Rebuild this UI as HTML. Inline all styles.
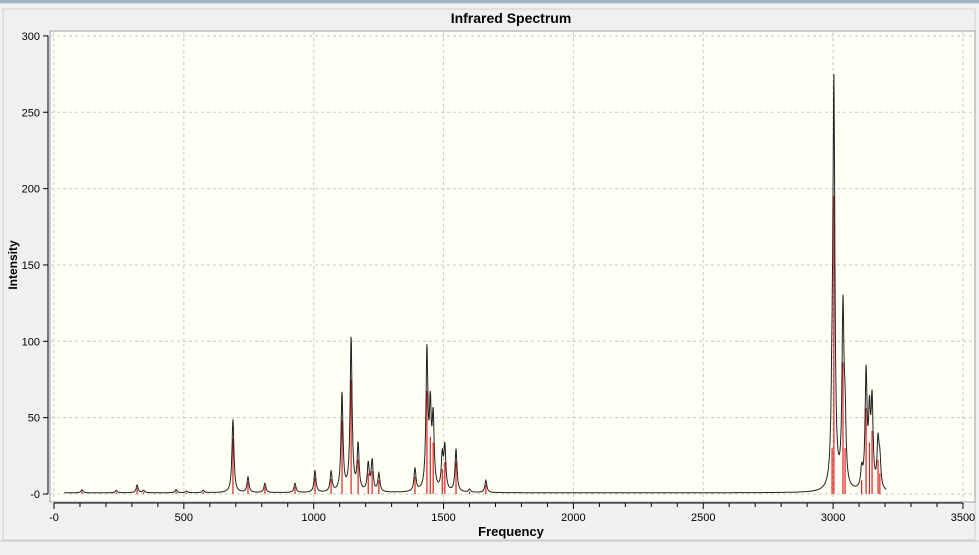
<!DOCTYPE html>
<html><head><meta charset="utf-8"><style>
html,body{margin:0;padding:0;width:979px;height:555px;overflow:hidden;background:#f0f0f0;font-family:"Liberation Sans",sans-serif}
</style></head><body>
<svg id="s" width="979" height="555" xmlns="http://www.w3.org/2000/svg" font-family="Liberation Sans, sans-serif">
<rect x="0" y="0" width="979" height="555" fill="#f0f0f0"/>
<rect x="0" y="0" width="979" height="3" fill="#9fb3c8"/>
<rect x="0" y="3" width="979" height="1" fill="#d8e0e8"/>
<rect x="3" y="9" width="972" height="531" fill="#f0f0f0" stroke="#d0d0d0"/>
<line x1="0" y1="541" x2="979" y2="541" stroke="#c8c8c8"/>
<text x="511" y="23" font-size="14" font-weight="bold" text-anchor="middle" fill="#000">Infrared Spectrum</text>
<rect x="50" y="31" width="925" height="471" fill="#fffff6" stroke="#a0a0a0"/>
<g id="grid" stroke="#c8c8c8" stroke-dasharray="3,3" fill="none"></g>
<g id="ax" stroke="#000" fill="none"></g>
<g id="lab" font-size="11" fill="#000"></g>
<g id="sticks" stroke="#e02020" stroke-width="1.2"></g>
<path id="sp" fill="none" stroke="#222" stroke-width="1"/>
<text x="511" y="536" font-size="13" font-weight="bold" text-anchor="middle">Frequency</text>
<text transform="translate(17,265) rotate(-90)" font-size="12" font-weight="bold" text-anchor="middle">Intensity</text>
</svg>
<script>
var NS="http://www.w3.org/2000/svg";
function X(f){return 54+f*0.2597}
function Y(v){return 494-v*1.527}
function el(p,t,a,txt){var e=document.createElementNS(NS,t);for(var k in a)e.setAttribute(k,a[k]);if(txt!==undefined)e.textContent=txt;document.getElementById(p).appendChild(e);return e}
for(var f=0;f<=3500;f+=500){el("grid","line",{x1:X(f),y1:32,x2:X(f),y2:501});}
for(var v=0;v<=300;v+=50){el("grid","line",{x1:51,y1:Y(v),x2:974,y2:Y(v)});}
el("ax","line",{x1:48,y1:Y(300),x2:48,y2:Y(0)});
for(var v=0;v<=300;v+=50){el("ax","line",{x1:43,y1:Y(v),x2:48,y2:Y(v)});el("lab","text",{x:40,y:Y(v)+4,"text-anchor":"end"},v==0?"-0":v);}
el("ax","line",{x1:X(0),y1:503,x2:X(3500),y2:503});
for(var f=0;f<=3500;f+=100){el("ax","line",{x1:X(f),y1:503,x2:X(f),y2:f%500==0?509:507});}
for(var f=0;f<=3500;f+=500){el("lab","text",{x:X(f),y:521,"text-anchor":"middle"},f==0?"-0":f);}
var P=[[108,2],[240,1.5],[320,5],[345,1.5],[470,2],[510,1],[575,1.5],[689,48],[747,10],[812,6],[928,6],[1005,14],[1067,13],[1109,64],[1144,100],[1171,30],[1210,18],[1225,20],[1251,12],[1390,15],[1436,90],[1449,50],[1460,45],[1495,22],[1505,28],[1548,28],[1600,2],[1663,8],
[2996,40],[3003,260],[3038,115],[3046,40],[3110,12],[3127,75],[3140,45],[3150,55],[3173,30],[3180,18]];
var g=4.5;
function I(f){var s=0.8;for(var i=0;i<P.length;i++){var d=(f-P[i][0])/g;s+=P[i][1]/(1+d*d);}return s}
var d="";for(var f=40;f<=3205;f+=1){var v=I(f);if(v>300)v=300;d+=(f==40?"M":"L")+X(f).toFixed(1)+","+Y(v).toFixed(1);}
document.getElementById("sp").setAttribute("d",d);
for(var i=0;i<P.length;i++){el("sticks","line",{x1:X(P[i][0]),y1:494,x2:X(P[i][0]),y2:Y(P[i][1]*0.75)});}
</script>
</body></html>
